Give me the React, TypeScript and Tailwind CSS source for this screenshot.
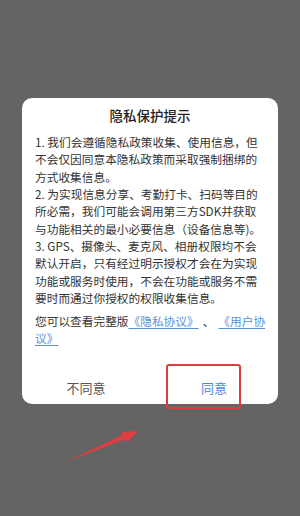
import React from "react";

export default function App() {
  const font = { fontFamily: '"Noto Sans CJK SC", "Noto Sans", sans-serif' };
  return (
    <div className="relative w-[300px] h-[516px] bg-[#646464] overflow-hidden" style={font}>
      <div className="pt-[98px] px-[22px]">
        <div className="bg-white rounded-[10px] flex flex-col">
          <div className="pt-[7px] h-[28px] leading-[20px] text-center text-[13.5px] font-medium text-[#222]">
            隐私保护提示
          </div>
          <div className="mt-[7px] px-[13px] text-[11.7px] leading-[17.35px] text-[#333] whitespace-nowrap">
            <p>
              1. 我们会遵循隐私政策收集、使用信息，但<br />
              不会仅因同意本隐私政策而采取强制捆绑的<br />
              方式收集信息。<br />
              2. 为实现信息分享、考勤打卡、扫码等目的<br />
              所必需，我们可能会调用第三方SDK并获取<br />
              与功能相关的最小必要信息（设备信息等)。<br />
              3. GPS、摄像头、麦克风、相册权限均不会<br />
              默认开启，只有经过明示授权才会在为实现<br />
              功能或服务时使用，不会在功能或服务不需<br />
              要时而通过你授权的权限收集信息。
            </p>
            <p className="mt-[5.4px]">
              您可以查看完整版<span className="text-[#5b8fdb] underline underline-offset-2">《隐私协议》</span>
              <span className="inline-block mx-[4px]">、</span>
              <span className="text-[#5b8fdb] underline underline-offset-2">《用户协</span>
              <br />
              <span className="text-[#5b8fdb] underline underline-offset-2">议》</span>
            </p>
          </div>
          <div className="mt-[26px] h-[31px] flex">
            <div className="flex-1 flex items-center justify-center text-[13px] text-[#555]">不同意</div>
            <div className="flex-1 flex items-center justify-center text-[13px] text-[#4a8be0]">同意</div>
          </div>
        </div>
      </div>
      <div className="absolute left-[166px] top-[364px] w-[75px] h-[45px] border-2 border-[#e23b3b] rounded-[3px]" />
      <svg className="absolute left-0 top-0" width="300" height="516" viewBox="0 0 300 516">
        <polygon
          points="65,462 122,435.3 121.5,432 138,431 127.5,442 124.5,439.5"
          fill="#ea3a40"
          opacity="0.9"
        />
      </svg>
    </div>
  );
}
